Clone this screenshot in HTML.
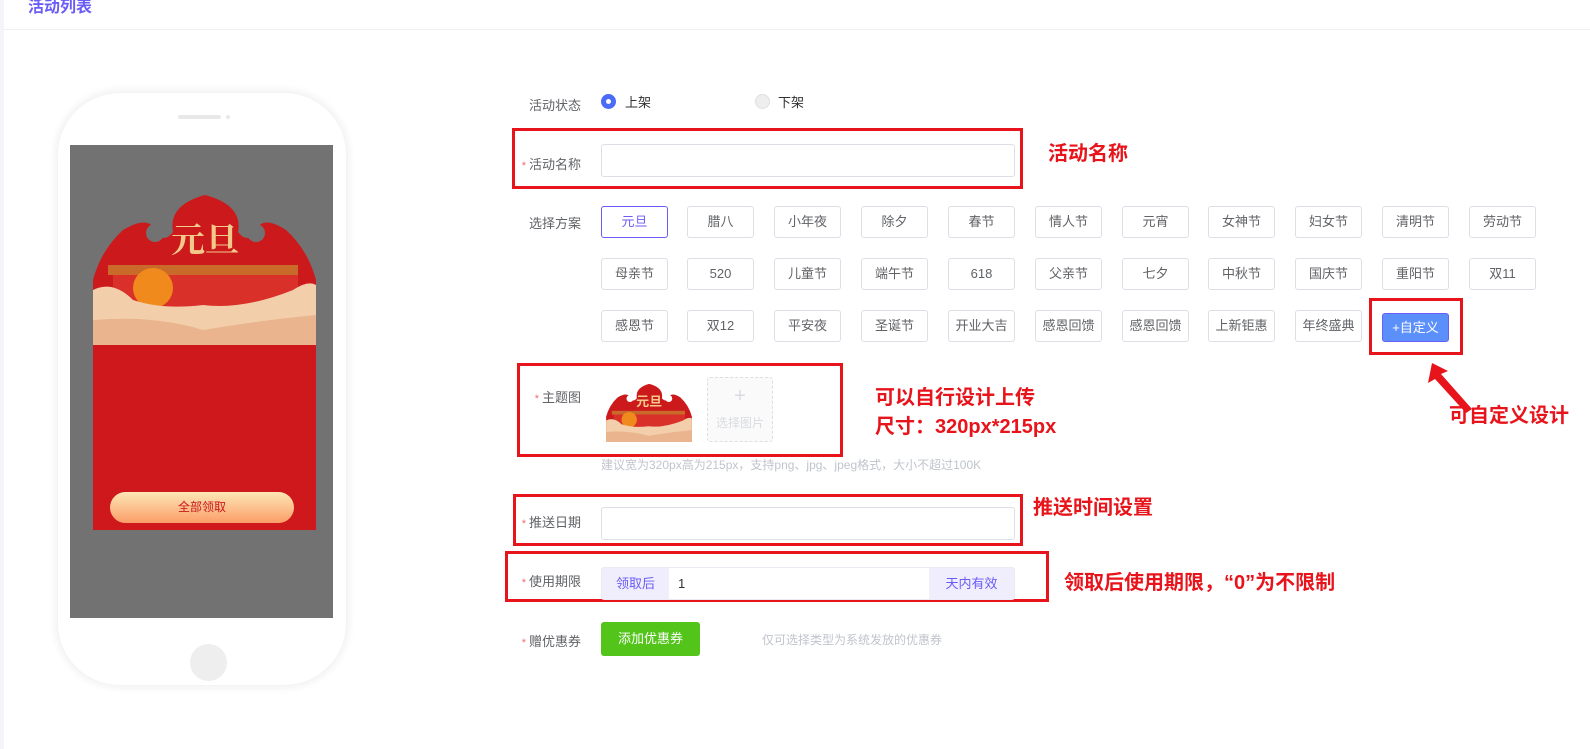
<!DOCTYPE html>
<html><head><meta charset="utf-8"><style>
*{margin:0;padding:0;box-sizing:border-box}
body{width:1590px;height:749px;background:#fff;font-family:"Liberation Sans","Noto Sans CJK SC",sans-serif;position:relative;overflow:hidden;color:#606266}
.a{position:absolute}
.lbl{position:absolute;font-size:13px;color:#606266;text-align:right;width:90px;left:491px}
.lbl i{color:#f56c6c;font-style:normal;font-size:11px;margin-right:3px}
.btn{position:absolute;width:67px;height:32px;border:1px solid #dcdfe6;border-radius:3px;font-size:13px;color:#606266;text-align:center;line-height:30px;background:#fff}
.rb{position:absolute;border:3px solid #e8141b}
.ann{position:absolute;color:#e8141b;font-weight:bold;font-size:20px;white-space:nowrap}
.inp{position:absolute;border:1px solid #dcdfe6;border-radius:3px;background:#fff}
</style></head><body>
<div class="a" style="left:0;top:0;width:4px;height:749px;background:#f3f5f9"></div>
<div class="a" style="left:28px;top:-7px;font-size:16px;font-weight:bold;color:#6a5cf6">活动列表</div>
<div class="a" style="left:4px;top:29px;width:1586px;height:1px;background:#eef0f4"></div>

<div class="a" style="left:58px;top:93px;width:288px;height:592px;border-radius:62px;background:#fff;box-shadow:0 0 8px 3px #f1f1f1"></div>
<div class="a" style="left:178px;top:115px;width:43px;height:4px;border-radius:2px;background:#e8e8e8"></div>
<div class="a" style="left:226px;top:115px;width:4px;height:4px;border-radius:2px;background:#e8e8e8"></div>
<div class="a" style="left:70px;top:145px;width:263px;height:473px;background:#727272"></div>
<svg class="a" style="left:93px;top:190px" width="223" height="156" viewBox="0 0 223 156">
<path d="M0 90 Q8 60 30 40 Q55 25 62 40 Q70 55 80 42 Q75 15 112 5 Q150 15 145 42 Q155 55 163 40 Q170 25 193 40 Q215 60 223 90 L223 156 L0 156Z" fill="#cc1a1c"/>
<circle cx="62" cy="43" r="9" fill="#727272"/><circle cx="163" cy="43" r="9" fill="#727272"/>
<text x="78" y="62" font-size="34" fill="#f2c98a" font-weight="bold" font-family="Noto Serif CJK SC,serif">元旦</text>
<rect x="15" y="75" width="190" height="10" fill="#c96a2a"/>
<rect x="20" y="85" width="185" height="40" fill="#d9302a"/>
<circle cx="60" cy="98" r="20" fill="#f08a1c"/>
<path d="M0 100 Q20 90 40 110 Q70 120 110 115 Q150 120 200 100 Q215 90 223 95 L223 156 L0 156Z" fill="#f3ceaa"/>
<path d="M0 130 Q60 125 110 140 Q170 130 223 125 L223 156 L0 156Z" fill="#e9b48e"/>
</svg>
<div class="a" style="left:93px;top:345px;width:223px;height:185px;background:#cf181b"></div>
<div class="a" style="left:110px;top:492px;width:184px;height:31px;border-radius:16px;background:linear-gradient(#fde7b5,#fb9d68);color:#c8161b;font-size:12px;text-align:center;line-height:31px">全部领取</div>
<div class="a" style="left:190px;top:644px;width:37px;height:37px;border-radius:50%;background:#eee"></div>

<div class="lbl" style="top:95px">活动状态</div>
<div class="a" style="left:601px;top:94px;width:15px;height:15px;border-radius:50%;background:#4a6cf7"></div>
<div class="a" style="left:606px;top:99px;width:5px;height:5px;border-radius:50%;background:#fff"></div>
<div class="a" style="left:625px;top:92px;font-size:13px;color:#303133">上架</div>
<div class="a" style="left:755px;top:94px;width:15px;height:15px;border-radius:50%;background:#eee;border:1px solid #e0e0e0"></div>
<div class="a" style="left:778px;top:92px;font-size:13px;color:#303133">下架</div>

<div class="rb" style="left:512px;top:128px;width:511px;height:61px"></div>
<div class="lbl" style="top:154px"><i>*</i>活动名称</div>
<div class="inp" style="left:601px;top:144px;width:414px;height:33px"></div>
<div class="ann" style="left:1048px;top:137px">活动名称</div>

<div class="lbl" style="top:213px">选择方案</div>
<div class="btn" style="left:601px;top:206px;border-color:#6a5cf6;color:#6a5cf6">元旦</div>
<div class="btn" style="left:687px;top:206px">腊八</div>
<div class="btn" style="left:774px;top:206px">小年夜</div>
<div class="btn" style="left:861px;top:206px">除夕</div>
<div class="btn" style="left:948px;top:206px">春节</div>
<div class="btn" style="left:1035px;top:206px">情人节</div>
<div class="btn" style="left:1122px;top:206px">元宵</div>
<div class="btn" style="left:1208px;top:206px">女神节</div>
<div class="btn" style="left:1295px;top:206px">妇女节</div>
<div class="btn" style="left:1382px;top:206px">清明节</div>
<div class="btn" style="left:1469px;top:206px">劳动节</div>

<div class="btn" style="left:601px;top:258px">母亲节</div>
<div class="btn" style="left:687px;top:258px">520</div>
<div class="btn" style="left:774px;top:258px">儿童节</div>
<div class="btn" style="left:861px;top:258px">端午节</div>
<div class="btn" style="left:948px;top:258px">618</div>
<div class="btn" style="left:1035px;top:258px">父亲节</div>
<div class="btn" style="left:1122px;top:258px">七夕</div>
<div class="btn" style="left:1208px;top:258px">中秋节</div>
<div class="btn" style="left:1295px;top:258px">国庆节</div>
<div class="btn" style="left:1382px;top:258px">重阳节</div>
<div class="btn" style="left:1469px;top:258px">双11</div>

<div class="btn" style="left:601px;top:310px">感恩节</div>
<div class="btn" style="left:687px;top:310px">双12</div>
<div class="btn" style="left:774px;top:310px">平安夜</div>
<div class="btn" style="left:861px;top:310px">圣诞节</div>
<div class="btn" style="left:948px;top:310px">开业大吉</div>
<div class="btn" style="left:1035px;top:310px">感恩回馈</div>
<div class="btn" style="left:1122px;top:310px">感恩回馈</div>
<div class="btn" style="left:1208px;top:310px">上新钜惠</div>
<div class="btn" style="left:1295px;top:310px">年终盛典</div>
<div class="btn" style="left:1382px;top:313px;height:29px;line-height:27px;background:#5b8ff9;border-color:#6a5cf6;color:#fff">+自定义</div>
<div class="rb" style="left:1369px;top:298px;width:94px;height:57px"></div>
<svg class="a" style="left:1420px;top:355px" width="60" height="60"><path d="M12 8 L8 28 L15 24 L46 58 L52 54 L21 19 L28 16Z" fill="#e8141b"/></svg>
<div class="ann" style="left:1449px;top:399px">可自定义设计</div>

<div class="rb" style="left:517px;top:363px;width:326px;height:94px"></div>
<div class="lbl" style="top:387px"><i>*</i>主题图</div>
<svg class="a" style="left:602px;top:382px" width="94" height="60" viewBox="0 0 223 156">
<path d="M0 90 Q8 60 30 40 Q55 25 62 40 Q70 55 80 42 Q75 15 112 5 Q150 15 145 42 Q155 55 163 40 Q170 25 193 40 Q215 60 223 90 L223 156 L0 156Z" fill="#cc1a1c"/>
<circle cx="62" cy="43" r="9" fill="#fff"/><circle cx="163" cy="43" r="9" fill="#fff"/>
<text x="78" y="62" font-size="34" fill="#f2c98a" font-weight="bold">元旦</text>
<rect x="15" y="75" width="190" height="10" fill="#c96a2a"/>
<rect x="20" y="85" width="185" height="40" fill="#d9302a"/>
<circle cx="60" cy="98" r="20" fill="#f08a1c"/>
<path d="M0 100 Q20 90 40 110 Q70 120 110 115 Q150 120 200 100 Q215 90 223 95 L223 156 L0 156Z" fill="#f3ceaa"/>
<path d="M0 130 Q60 125 110 140 Q170 130 223 125 L223 156 L0 156Z" fill="#e9b48e"/>
</svg>
<div class="a" style="left:707px;top:377px;width:66px;height:65px;border:1px dashed #dcdfe6;border-radius:3px;background:#fafafa;text-align:center;color:#d8dbe0">
<div style="font-size:20px;line-height:36px">+</div><div style="font-size:12px">选择图片</div></div>
<div class="ann" style="left:875px;top:384px;line-height:29px">可以自行设计上传<br>尺寸：320px*215px</div>
<div class="a" style="left:601px;top:456px;font-size:12px;color:#c0c4cc">建议宽为320px高为215px，支持png、jpg、jpeg格式，大小不超过100K</div>

<div class="rb" style="left:513px;top:494px;width:510px;height:52px"></div>
<div class="lbl" style="top:512px"><i>*</i>推送日期</div>
<div class="inp" style="left:601px;top:507px;width:414px;height:33px"></div>
<div class="ann" style="left:1033px;top:491px">推送时间设置</div>

<div class="rb" style="left:505px;top:551px;width:544px;height:51px"></div>
<div class="lbl" style="top:571px"><i>*</i>使用期限</div>
<div class="inp" style="left:601px;top:567px;width:414px;height:33px;border-color:#ebeaf5"></div>
<div class="a" style="left:602px;top:568px;width:67px;height:31px;background:#f0eefc;color:#6a5cf6;font-size:13px;text-align:center;line-height:31px">领取后</div>
<div class="a" style="left:678px;top:568px;font-size:13px;color:#303133;line-height:31px">1</div>
<div class="a" style="left:929px;top:568px;width:85px;height:31px;background:#f0eefc;color:#6a5cf6;font-size:13px;text-align:center;line-height:31px">天内有效</div>
<div class="ann" style="left:1064px;top:566px">领取后使用期限，“0”为不限制</div>

<div class="lbl" style="top:631px"><i>*</i>赠优惠券</div>
<div class="a" style="left:601px;top:622px;width:99px;height:34px;background:#52c41a;border-radius:3px;color:#fff;font-size:13px;text-align:center;line-height:34px">添加优惠券</div>
<div class="a" style="left:762px;top:631px;font-size:12px;color:#c0c4cc">仅可选择类型为系统发放的优惠券</div>
</body></html>
